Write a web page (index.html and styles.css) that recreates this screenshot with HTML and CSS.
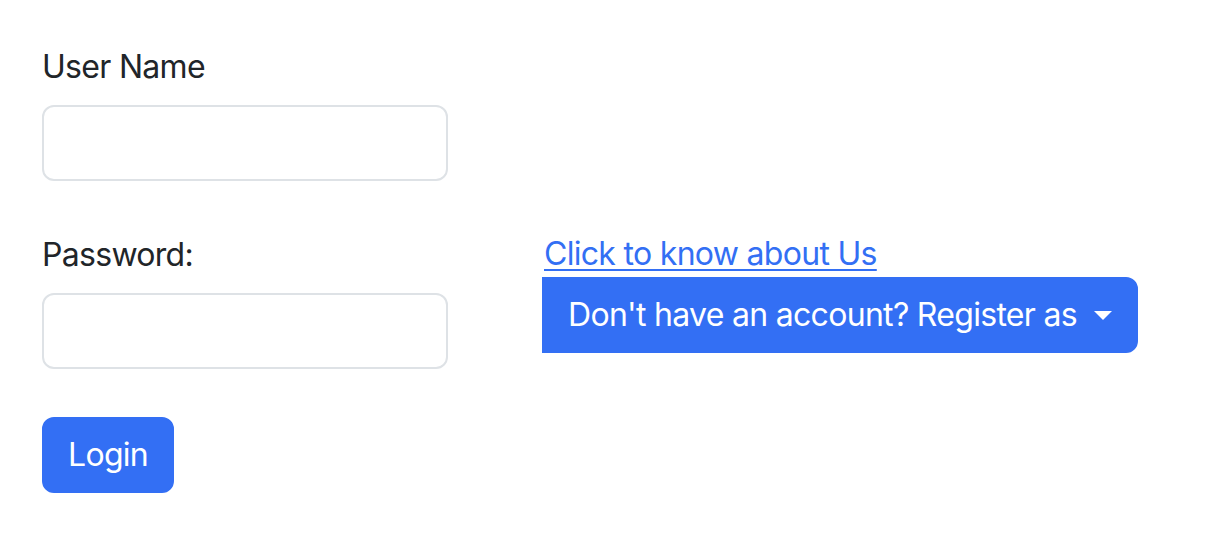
FILE: index.html
```html
<!DOCTYPE html>
<html lang="en">
<head>
<meta charset="utf-8">
<title>Login</title>
<link rel="stylesheet" href="styles.css">
</head>
<body>
<form class="login-form">
  <div class="field">
    <label class="field-label" for="username">User Name</label>
    <input class="field-input" id="username" type="text">
  </div>
  <div class="split">
    <div class="field field-left">
      <label class="field-label" for="password">Password:</label>
      <input class="field-input" id="password" type="password">
    </div>
    <div class="aside">
      <a class="about-link" href="#">Click to know about Us</a>
      <button class="btn btn-dropdown" type="button">Don't have an account? Register as<span class="caret"></span></button>
    </div>
  </div>
  <button class="btn btn-login" type="submit">Login</button>
</form>
</body>
</html>
```

FILE: styles.css
```css
* { box-sizing: border-box; }

html, body {
  margin: 0;
  padding: 0;
  background: #ffffff;
}

body {
  font-family: Inter, "Noto Sans", "Liberation Sans", sans-serif;
  font-size: 32px;
  line-height: 48px;
  letter-spacing: -0.7px;
  color: #212529;
}

.login-form {
  padding: 41px 0 0 42px;
  display: flex;
  flex-direction: column;
  align-items: flex-start;
}

.field {
  display: flex;
  flex-direction: column;
  margin-bottom: 48px;
}

.field-label {
  display: block;
  font-size: 32px;
  line-height: 48px;
  padding-top: 2px;
  margin-bottom: 14px;
}

.field-input {
  width: 406px;
  height: 76px;
  border: 2px solid #dee2e6;
  border-radius: 12px;
  padding: 12px 24px;
  font: inherit;
  background: #fff;
  outline: none;
}

.split {
  display: flex;
  align-items: flex-start;
}

.field-left {
  width: 500px;
}

.aside {
  display: flex;
  flex-direction: column;
  align-items: flex-start;
}

.about-link {
  display: block;
  color: #336ff4;
  text-decoration: underline;
  text-decoration-thickness: 2px;
  text-underline-offset: 4px;
  font-size: 32px;
  line-height: 46px;
  padding-top: 2px;
  margin-left: 2px;
}

.btn {
  font: inherit;
  font-size: 32px;
  line-height: 48px;
  letter-spacing: -0.7px;
  color: #ffffff;
  background: #336ff4;
  border: 2px solid #336ff4;
  padding: 12px 24px;
  cursor: pointer;
}

.btn-dropdown {
  height: 76px;
  border-radius: 0 12px 12px 0;
  display: flex;
  align-items: center;
}

.caret {
  display: inline-block;
  margin-left: 17px;
  width: 0;
  height: 0;
  border-top: 9px solid #ffffff;
  border-left: 9px solid transparent;
  border-right: 9px solid transparent;
}

.btn-login {
  height: 76px;
  border-radius: 12px;
}
```
